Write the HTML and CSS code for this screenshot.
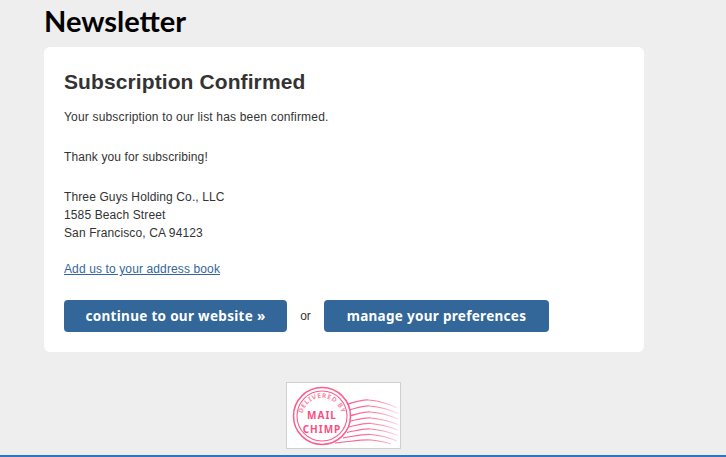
FILE: index.html
```html
<!DOCTYPE html>
<html lang="en">
<head>
<meta charset="utf-8">
<title>Newsletter</title>
<link rel="stylesheet" href="styles.css">
</head>
<body>
<div class="page">
  <h1 class="site-title">Newsletter</h1>
  <main class="card">
    <h2 class="card-title">Subscription Confirmed</h2>
    <p class="para para-lead">Your subscription to our list has been confirmed.</p>
    <p class="para">Thank you for subscribing!</p>
    <p class="para para-address">Three Guys Holding Co., LLC<br>1585 Beach Street<br>San Francisco, CA 94123</p>
    <p class="para"><a class="link" href="#">Add us to your address book</a></p>
    <div class="actions">
      <a class="btn btn-first" href="#">continue to our website »</a>
      <span class="or">or</span>
      <a class="btn btn-second" href="#">manage your preferences</a>
    </div>
  </main>
  <div class="badge-row">
    <a class="badge" href="#">
      <svg class="stamp" width="113" height="65" viewBox="0 0 113 65">
        <defs>
          <path id="arc" d="M15 35 A 20 20 0 0 1 55 35"/>
          <linearGradient id="fade" gradientUnits="userSpaceOnUse" x1="60" y1="0" x2="112" y2="0">
            <stop offset="0" stop-color="#fb5c8a"/>
            <stop offset=".55" stop-color="#fb7fa3"/>
            <stop offset="1" stop-color="#fde3ea"/>
          </linearGradient>
        </defs>
        <g fill="none" stroke="url(#fade)" stroke-width="1.1">
          <path d="M58 22 C68 19 76 16 82 17 C92 18 100 20 110 25"/>
          <path d="M60 27.5 C70 25 77 22 83 23 C93 24 101 26 111 30.5"/>
          <path d="M62 33 C71 31 78 28 84 29 C94 30 102 32 111 36"/>
          <path d="M62 38.5 C71 36.5 78 34 84 35 C94 36 102 38 111 41.5"/>
          <path d="M62 44 C71 42 78 39.5 84 40.5 C94 41.5 102 43.5 111 47"/>
          <path d="M60 49.5 C70 47.5 78 45 84 46 C94 47 102 49 111 52.5"/>
          <path d="M56 55 C68 53 78 50.5 84 51.5 C94 52.5 102 54.5 110 58"/>
          <path d="M48 60 C62 59 76 56 84 57 C92 58 98 59 104 61"/>
        </g>
        <circle cx="35" cy="33" r="28.5" fill="#fff" stroke="#fb5c8a" stroke-width="1.5"/>
        <circle cx="35" cy="33" r="25" fill="#fff" stroke="#fb5c8a" stroke-width="1.1"/>
        <text class="stamp-arc"><textPath href="#arc" startOffset="50%" text-anchor="middle">DELIVERED BY</textPath></text>
        <text class="stamp-big" x="35" y="35.5" text-anchor="middle">MAIL</text>
        <text class="stamp-big" x="35" y="49.5" text-anchor="middle">CHIMP</text>
      </svg>
    </a>
  </div>
</div>
</body>
</html>
```
FILE: styles.css
```css
* { box-sizing: border-box; }
html, body { margin: 0; height: 100%; }
body {
  background: #eeeeee;
  font-family: "Liberation Sans", Arial, sans-serif;
  color: #333;
  overflow: hidden;
}
.page {
  height: 457px;
  padding-left: 44px;
  border-bottom: 2px solid #2f76c9;
}
.site-title {
  margin: 0;
  height: 47px;
  padding-top: 4px;
  font-family: "Lato", "Liberation Sans", sans-serif;
  font-size: 29px;
  line-height: 34px;
  font-weight: 700;
  color: #000;
}
.card {
  width: 600px;
  height: 305px;
  padding: 20px;
  background: #fff;
  border-radius: 6px;
}
.card-title {
  margin: 3px 0 0;
  font-size: 21px;
  line-height: 24px;
  font-weight: 700;
  letter-spacing: .1px;
  color: #333;
}
.para {
  margin: 0 0 22px;
  font-size: 12px;
  line-height: 18px;
  letter-spacing: .12px;
}
.para-lead {
  margin-top: 14px;
  letter-spacing: .18px;
}
.para-address { margin-bottom: 18px; }
.link { color: #336699; text-decoration: underline; }
.actions {
  display: flex;
  align-items: center;
}
.btn {
  display: block;
  height: 32px;
  border-radius: 4px;
  background: #336699;
  color: #fff;
  font-family: "Noto Sans", sans-serif;
  font-size: 13.5px;
  font-weight: 700;
  letter-spacing: .3px;
  line-height: 32px;
  text-align: center;
  text-decoration: none;
}
.btn-first { width: 223px; }
.btn-second { width: 225px; }
.or { width: 37px; text-align: center; font-size: 12px; }
.badge-row {
  width: 600px;
  margin-top: 30px;
  padding-left: 242px;
}
.badge {
  display: block;
  width: 115px;
  height: 67px;
  background: #fff;
  border: 1px solid #cfcfcf;
}
.stamp { display: block; }
.stamp-arc {
  font-family: "Noto Sans", sans-serif;
  font-size: 6.5px;
  font-weight: 700;
  letter-spacing: .7px;
  fill: #fb86a8;
}
.stamp-big {
  font-family: "Noto Sans", sans-serif;
  font-size: 10px;
  font-weight: 700;
  letter-spacing: 1px;
  fill: #f8507f;
}
```
